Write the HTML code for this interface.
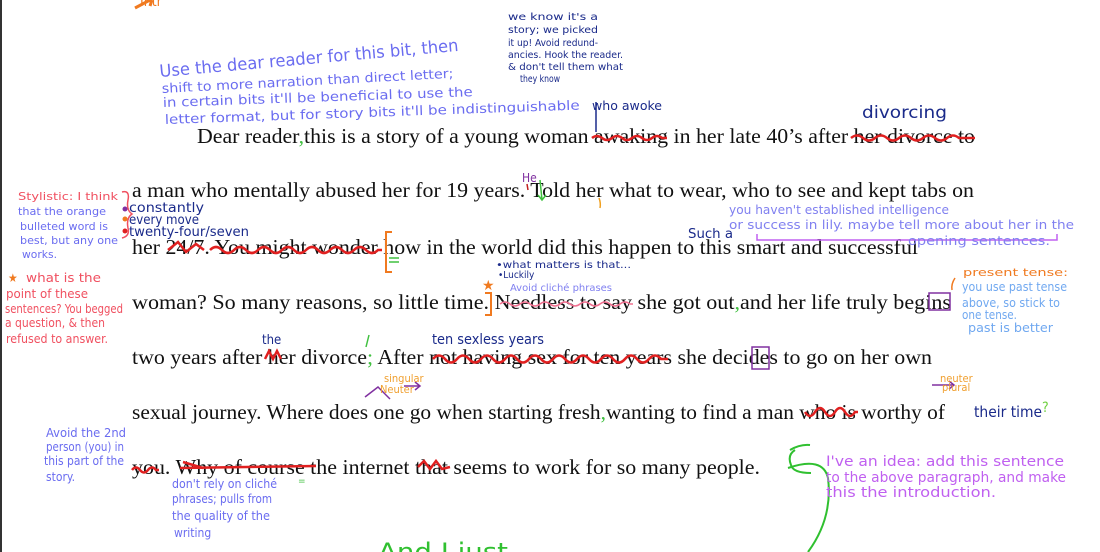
<!DOCTYPE html>
<html><head><meta charset="utf-8"><style>
html,body{margin:0;padding:0;background:#fff;width:1100px;height:552px;overflow:hidden}
svg{display:block}
.m{font-family:"Liberation Serif",serif;font-size:21px;fill:#111}
.h{font-family:"DejaVu Sans Condensed","DejaVu Sans",sans-serif}
</style></head><body>
<svg width="1100" height="552" viewBox="0 0 1100 552" xmlns="http://www.w3.org/2000/svg" xml:space="preserve">
<rect x="0" y="0" width="2" height="552" fill="#333"/>
<path d="M135 8 L150 0 M150 6 L152 0" stroke="#f07a20" stroke-width="3" fill="none"/>
<text class="h" x="140" y="6" font-size="14" fill="#f07a20">Intr</text>

<!-- main text -->
<text class="m" x="197" y="143" textLength="778" lengthAdjust="spacingAndGlyphs">Dear reader<tspan fill="#40c040">,</tspan>this is a story of a young woman awaking in her late 40’s after her divorce to</text>
<text class="m" x="132" y="197" textLength="842" lengthAdjust="spacingAndGlyphs">a man who mentally abused her for 19 years.  Told her what to wear, who to see and kept tabs on</text>
<text class="m" x="132" y="254" textLength="786" lengthAdjust="spacingAndGlyphs">her 24/7.  You might wonder how in the world did this happen to this smart and successful</text>
<text class="m" x="132" y="309" textLength="819" lengthAdjust="spacingAndGlyphs">woman?  So many reasons, so little time.  Needless to say she got out<tspan fill="#40c040">,</tspan>and her life truly begins</text>
<text class="m" x="132" y="364" textLength="800" lengthAdjust="spacingAndGlyphs">two years after her divorce<tspan fill="#40c040">;</tspan>  After not having sex for ten years she decides to go on her own</text>
<text class="m" x="132" y="419" textLength="813" lengthAdjust="spacingAndGlyphs">sexual journey.  Where does one go when starting fresh<tspan fill="#40c040">,</tspan>wanting to find a man who is worthy of</text>
<text class="m" x="132" y="474" textLength="628" lengthAdjust="spacingAndGlyphs">you.  Why of course the internet that seems to work for so many people.</text>

<!-- strikes -->
<g stroke="#e02020" stroke-width="2.5" fill="none">
<path d="M592 138 q5 -4 10 0 t10 0 t10 0 t10 0 t10 0 t10 0 t10 0 l5 0"/>
<path d="M851 138 q6 -5 12 0 t12 0 t12 0 t12 0 t12 0 t12 0 t12 0 t12 0 t12 0 l16 0"/>
<path d="M168 250 l10 -8 l8 10 l10 -8 l8 6"/>
<path d="M210 250 q6 -6 12 0 t12 0 t12 0 t12 0 t12 0 t12 0 t12 0 t12 0 t12 0 t12 0 t12 0 t12 0 t12 0 t12 0 l4 0"/>
<path d="M265 359 l4 -8 l4 8 l4 -8 l4 8"/>
<path d="M433 359 q6 -7 12 0 t12 0 t12 0 t12 0 t12 0 t12 0 t12 0 t12 0 t12 0 t12 0 t12 0 t12 0 t12 0 t12 0 t12 0 t12 0 t12 0 t12 0 t12 0 l7 0"/>
<path d="M805 412 q5 8 10 0 t10 0 t10 0 t10 0 t10 0 l3 0"/>
<path d="M132 470 q4 -5 8 0 t8 0 t8 0 l3 0"/>
<path d="M180 468 l136 -2"/><path d="M183 462 l20 6"/>
<path d="M418 467 l6 -6 l6 8 l6 -8 l6 8 l8 -2"/>
</g>
<path d="M500 304 q5 -4 10 0 t10 0 t10 0 t10 0 t10 0 t10 0 t10 0 t10 0 t10 0 t10 0 t10 0 t10 0 t10 0 l3 0" stroke="#f07090" stroke-width="1.5" fill="none"/>

<!-- boxes / marks -->
<rect x="929" y="293" width="21" height="17" fill="none" stroke="#8030a0" stroke-width="1.5"/>
<rect x="752" y="347" width="17" height="22" fill="none" stroke="#8030a0" stroke-width="1.5"/>
<path d="M392 232 l-6 0 l0 40 l6 0" stroke="#f07a20" stroke-width="2" fill="none"/>
<path d="M389 258 l10 0 M389 262 l10 0" stroke="#40c040" stroke-width="1.5"/>
<path d="M485 293 l6 0 l0 22 l-6 0" stroke="#f07a20" stroke-width="2" fill="none"/>
<text x="482" y="290" font-size="14" fill="#f07a20">★</text>
<path d="M600 208 q1 -5 -1 -10" stroke="#f0a020" stroke-width="1.5" fill="none"/>
<path d="M540 180 l2 20 m-4 -5 l4 5 l4 -5" stroke="#40c040" stroke-width="1.5" fill="none"/>
<path d="M528 190 l-1 -6" stroke="#c02020" stroke-width="1.5"/>
<path d="M596 132 l0 -30" stroke="#1a2a8a" stroke-width="1.5"/>
<path d="M366 347 l3 -12" stroke="#40c040" stroke-width="1.5"/>
<path d="M365 397 l13 -10 l12 12" stroke="#8030a0" stroke-width="1.5" fill="none"/>
<path d="M404 386 l16 0 m-5 -4 l5 4 l-5 4" stroke="#8030a0" stroke-width="1.5" fill="none"/>
<path d="M932 385 l22 0 m-5 -4 l5 4 l-5 4" stroke="#8030a0" stroke-width="1.5" fill="none"/>
<path d="M795 450 q-8 5 -4 15 q2 8 20 8 M788 468 q35 -12 40 10 q5 40 -20 74 M790 450 q10 -6 20 -5" stroke="#30c030" stroke-width="2" fill="none"/>
<path d="M757 234 l0 6 l300 0 l0 -6" stroke="#c060f0" stroke-width="1.5" fill="none"/>
<path d="M955 278 q-4 6 -3 12" stroke="#f07a20" stroke-width="1.5" fill="none"/>
<path d="M122 192 q8 -2 6 8 q-2 10 4 14 q-6 4 -4 14 q2 8 -6 10" stroke="#f05060" stroke-width="1.5" fill="none"/>
<circle cx="125" cy="209" r="2.5" fill="#8030a0"/><circle cx="125" cy="219" r="2.5" fill="#f07a20"/><circle cx="125" cy="231" r="2.5" fill="#e02020"/>

<!-- handwritten notes -->
<g class="h">
<text x="160" y="77" font-size="17" fill="#6a6cf0" transform="rotate(-5 160 77)" textLength="300" lengthAdjust="spacingAndGlyphs">Use the dear reader for this bit, then</text>
<text x="162" y="93" font-size="13" fill="#6a6cf0" transform="rotate(-3 162 93)" textLength="292" lengthAdjust="spacingAndGlyphs">shift to more narration than direct letter;</text>
<text x="163" y="107" font-size="13" fill="#6a6cf0" transform="rotate(-2 163 107)" textLength="310" lengthAdjust="spacingAndGlyphs">in certain bits it'll be beneficial to use the</text>
<text x="165" y="124" font-size="13" fill="#6a6cf0" transform="rotate(-2 165 124)" textLength="415" lengthAdjust="spacingAndGlyphs">letter format, but for story bits it'll be indistinguishable</text>
<g font-size="10" fill="#1a2a8a">
<text x="508" y="20" textLength="90" lengthAdjust="spacingAndGlyphs">we know it's a</text>
<text x="508" y="33" textLength="90" lengthAdjust="spacingAndGlyphs">story; we picked</text>
<text x="508" y="46" textLength="90" lengthAdjust="spacingAndGlyphs">it up! Avoid redund-</text>
<text x="508" y="58" textLength="115" lengthAdjust="spacingAndGlyphs">ancies. Hook the reader.</text>
<text x="508" y="70" textLength="115" lengthAdjust="spacingAndGlyphs">&amp; don't tell them what</text>
<text x="520" y="82" textLength="40" lengthAdjust="spacingAndGlyphs">they know</text>
</g>
<text x="592" y="110" font-size="12" fill="#1a2a8a" textLength="70" lengthAdjust="spacingAndGlyphs">who awoke</text>
<text x="862" y="118" font-size="17" fill="#1a2a8a" textLength="85" lengthAdjust="spacingAndGlyphs">divorcing</text>
<text x="522" y="182" font-size="12" fill="#8030a0">He</text>
<g font-size="11" fill="#f05060">
<text x="18" y="200" textLength="100" lengthAdjust="spacingAndGlyphs">Stylistic: I think</text>
</g>
<g font-size="11" fill="#6a6cf0">
<text x="18" y="215" textLength="88" lengthAdjust="spacingAndGlyphs">that the orange</text>
<text x="20" y="230" textLength="88" lengthAdjust="spacingAndGlyphs">bulleted word is</text>
<text x="20" y="244" textLength="98" lengthAdjust="spacingAndGlyphs">best, but any one</text>
<text x="22" y="258" textLength="35" lengthAdjust="spacingAndGlyphs">works.</text>
</g>
<g font-size="13" fill="#1a2a8a">
<text x="129" y="212" textLength="75" lengthAdjust="spacingAndGlyphs">constantly</text>
<text x="129" y="224" textLength="70" lengthAdjust="spacingAndGlyphs">every move</text>
<text x="129" y="236" textLength="120" lengthAdjust="spacingAndGlyphs">twenty-four/seven</text>
</g>
<text x="688" y="238" font-size="13" fill="#1a2a8a" textLength="45" lengthAdjust="spacingAndGlyphs">Such a</text>
<g font-size="12" fill="#8080f0">
<text x="729" y="214" textLength="220" lengthAdjust="spacingAndGlyphs">you haven't established intelligence</text>
<text x="729" y="229" textLength="345" lengthAdjust="spacingAndGlyphs">or success in lily. maybe tell more about her in the</text>
<text x="908" y="245" textLength="142" lengthAdjust="spacingAndGlyphs">opening sentences.</text>
</g>
<g font-size="10" fill="#1a2a8a">
<text x="496" y="268" textLength="135" lengthAdjust="spacingAndGlyphs">•what matters is that...</text>
<text x="498" y="278">•Luckily</text>
</g>
<text x="510" y="291" font-size="10" fill="#8080f0" textLength="102" lengthAdjust="spacingAndGlyphs">Avoid cliché phrases</text>
<g font-size="12" fill="#f05060">
<text x="8" y="282" fill="#f07a20">★</text>
<text x="26" y="282" textLength="75" lengthAdjust="spacingAndGlyphs">what is the</text>
<text x="6" y="298" textLength="82" lengthAdjust="spacingAndGlyphs">point of these</text>
<text x="5" y="313" textLength="118" lengthAdjust="spacingAndGlyphs">sentences? You begged</text>
<text x="5" y="327" textLength="100" lengthAdjust="spacingAndGlyphs">a question, &amp; then</text>
<text x="6" y="343" textLength="102" lengthAdjust="spacingAndGlyphs">refused to answer.</text>
</g>
<text x="963" y="276" font-size="11" fill="#f07a20" textLength="105" lengthAdjust="spacingAndGlyphs">present tense:</text>
<g font-size="12" fill="#70a8f0">
<text x="962" y="291" textLength="105" lengthAdjust="spacingAndGlyphs">you use past tense</text>
<text x="962" y="307" textLength="98" lengthAdjust="spacingAndGlyphs">above, so stick to</text>
<text x="962" y="319" textLength="55" lengthAdjust="spacingAndGlyphs">one tense.</text>
<text x="968" y="332" textLength="85" lengthAdjust="spacingAndGlyphs">past is better</text>
</g>
<text x="262" y="344" font-size="13" fill="#1a2a8a">the</text>
<text x="432" y="344" font-size="14" fill="#1a2a8a" textLength="112" lengthAdjust="spacingAndGlyphs">ten sexless years</text>
<g font-size="11" fill="#f0a030">
<text x="384" y="382">singular</text>
<text x="380" y="393">Neuter</text>
<text x="940" y="382">neuter</text>
<text x="942" y="391">plural</text>
</g>
<text x="974" y="417" font-size="15" fill="#1a2a8a" textLength="68" lengthAdjust="spacingAndGlyphs">their time</text>
<text x="1042" y="412" font-size="14" fill="#70d040">?</text>
<g font-size="12" fill="#6a6cf0">
<text x="46" y="437" textLength="80" lengthAdjust="spacingAndGlyphs">Avoid the 2nd</text>
<text x="46" y="451" textLength="78" lengthAdjust="spacingAndGlyphs">person (you) in</text>
<text x="44" y="465" textLength="80" lengthAdjust="spacingAndGlyphs">this part of the</text>
<text x="46" y="481">story.</text>
<text x="172" y="488" textLength="105" lengthAdjust="spacingAndGlyphs">don't rely on cliché</text>
<text x="172" y="503" textLength="100" lengthAdjust="spacingAndGlyphs">phrases; pulls from</text>
<text x="172" y="520" textLength="98" lengthAdjust="spacingAndGlyphs">the quality of the</text>
<text x="174" y="537">writing</text>
</g>
<text x="298" y="484" font-size="10" fill="#40c040">=</text>
<g font-size="14" fill="#c060f0">
<text x="826" y="466" textLength="238" lengthAdjust="spacingAndGlyphs">I've an idea: add this sentence</text>
<text x="826" y="482" textLength="240" lengthAdjust="spacingAndGlyphs">to the above paragraph, and make</text>
<text x="826" y="497" textLength="170" lengthAdjust="spacingAndGlyphs">this the introduction.</text>
</g>
<text x="378" y="560" font-size="24" fill="#30c030" textLength="130" lengthAdjust="spacingAndGlyphs">And I just</text>
</g>
</svg>
</body></html>
